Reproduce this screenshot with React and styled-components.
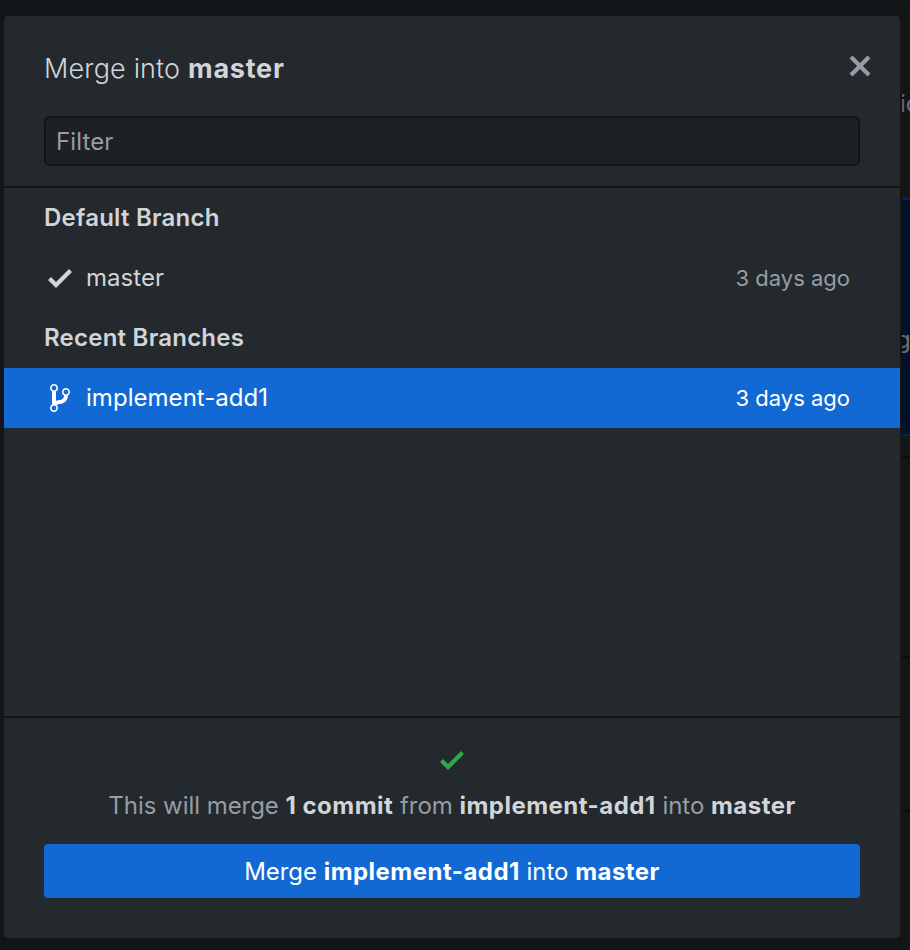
import React from 'react';
import styled, { createGlobalStyle } from 'styled-components';

const GlobalStyle = createGlobalStyle`
  * { box-sizing: border-box; }
  body {
    margin: 0;
    background: #14181b;
    font-family: Inter, "Liberation Sans", sans-serif;
    overflow: hidden;
  }
`;

const Window = styled.div`
  position: relative;
  width: 910px;
  height: 950px;
  overflow: hidden;
`;

const Backdrop = styled.div`
  display: flex;
  flex-direction: column;
  align-items: stretch;
  height: 100%;
  margin-left: 902px;
`;

const BackdropBlock = styled.div`
  flex: none;
  height: ${(p) => p.$height}px;
  padding-top: ${(p) => p.$top || 0}px;
  overflow: hidden;
  white-space: nowrap;
  font-size: 24px;
  line-height: 30px;
  color: #7c7d80;
  background: ${(p) => (p.$selected ? '#01132d' : 'transparent')};
  border-top: ${(p) => (p.$selected ? '2px solid #042a5a' : '0')};
  border-bottom: 2px solid ${(p) => (p.$selected ? '#042a5a' : p.$line || '#0a0b0c')};
`;

const BackdropText = styled.div`
  margin-left: ${(p) => p.$shift || 0}px;
`;

const Dialog = styled.section`
  position: absolute;
  top: 16px;
  left: 4px;
  width: 896px;
  height: 922px;
  display: flex;
  flex-direction: column;
  background: #24292d;
  border-radius: 4px;
  box-shadow: 0 0 0 2px #141414, 0 4px 14px 2px rgba(17, 17, 18, 0.5);
  color: #d1d5da;
`;

const Header = styled.header`
  flex: none;
  height: 172px;
  padding: 34px 28px 20px 40px;
  border-bottom: 2px solid #141414;
`;

const TitleBar = styled.div`
  display: flex;
  justify-content: space-between;
  height: 66px;
`;

const Title = styled.h1`
  margin: 1px 0 0;
  font-size: 27px;
  line-height: 36px;
  font-weight: 330;
  letter-spacing: 0.15px;
  b { font-weight: 700; letter-spacing: 0.75px; }
`;

const CloseButton = styled.button`
  height: 32px;
  padding: 0;
  border: 0;
  background: none;
  color: #959da5;
`;

const FilterInput = styled.input`
  display: block;
  width: 816px;
  height: 50px;
  padding: 0 10px;
  border: 2px solid #141414;
  border-radius: 6px;
  outline: none;
  background: #1d2024;
  font: 400 24px Inter, sans-serif;
  letter-spacing: 0.1px;
  color: #d1d5da;
  &::placeholder { color: #959da5; opacity: 1; }
`;

const BranchList = styled.div`
  flex: 1;
`;

const GroupTitle = styled.h2`
  margin: 0;
  height: 60px;
  padding-left: 40px;
  font-size: 24px;
  line-height: 59px;
  font-weight: 600;
  letter-spacing: 0.24px;
`;

const BranchRow = styled.div`
  display: flex;
  align-items: center;
  height: 60px;
  padding: 0 50px 0 40px;
  background: ${(p) => (p.$selected ? '#1269d3' : 'transparent')};
  color: ${(p) => (p.$selected ? '#fff' : '#d1d5da')};
`;

const IconSlot = styled.span`
  display: flex;
  justify-content: center;
  width: 32px;
  margin-right: 10px;
`;

const BranchName = styled.span`
  flex: 1;
  font-size: 24px;
  line-height: 30px;
  font-weight: 420;
  letter-spacing: 0.04px;
`;

const BranchDate = styled.time`
  font-size: 22px;
  line-height: 30px;
  font-weight: 410;
  color: ${(p) => (p.$selected ? '#fff' : '#959da5')};
`;

const Footer = styled.footer`
  flex: none;
  display: flex;
  flex-direction: column;
  align-items: center;
  height: 222px;
  padding: 26px 40px 40px;
  border-top: 2px solid #141414;
`;

const Summary = styled.p`
  margin: 14px 0 23px;
  font-size: 24px;
  line-height: 31px;
  letter-spacing: -0.04px;
  white-space: nowrap;
  color: #959da5;
  b { color: #d1d5da; font-weight: 700; letter-spacing: 0.47px; }
`;

const MergeButton = styled.button`
  width: 816px;
  height: 54px;
  padding: 0;
  border: 0;
  border-radius: 4px;
  background: #1269d3;
  color: #fff;
  font: 400 24px Inter, sans-serif;
  letter-spacing: -0.04px;
  b { font-weight: 700; letter-spacing: 0.47px; }
`;

const Glyph = styled.svg`
  display: block;
  fill: ${(p) => p.$color || 'currentColor'};
`;

const CheckIcon = ({ color }) => (
  <Glyph $color={color} width="24" height="32" viewBox="0 0 12 16">
    <path d="M12 5l-8 8-4-4 1.5-1.5L4 10l6.5-6.5z" />
  </Glyph>
);

const BranchIcon = () => (
  <Glyph width="20" height="32" viewBox="0 0 10 16">
    <path fillRule="evenodd" d="M10 5c0-1.11-.89-2-2-2a1.993 1.993 0 0 0-1 3.72v.3c-.02.52-.23.98-.63 1.38-.4.4-.86.61-1.38.63-.83.02-1.48.16-2 .45V4.72a1.993 1.993 0 0 0-1-3.72C.88 1 0 1.89 0 3a2 2 0 0 0 1 1.72v6.56c-.59.35-1 .99-1 1.72 0 1.11.89 2 2 2 1.11 0 2-.89 2-2 0-.53-.2-1-.53-1.36.09-.06.48-.41.59-.47.25-.11.56-.17.94-.17 1.05-.05 1.95-.45 2.75-1.25S8.95 7.77 9 6.73h-.02C9.59 6.37 10 5.73 10 5zM2 1.8c.66 0 1.2.55 1.2 1.2 0 .65-.55 1.2-1.2 1.2C1.35 4.2.8 3.65.8 3c0-.65.55-1.2 1.2-1.2zm0 12.41c-.66 0-1.2-.55-1.2-1.2 0-.65.55-1.2 1.2-1.2.65 0 1.2.55 1.2 1.2 0 .65-.55 1.2-1.2 1.2zm6-8c-.66 0-1.2-.55-1.2-1.2 0-.65.55-1.2 1.2-1.2.65 0 1.2.55 1.2 1.2 0 .65-.55 1.2-1.2 1.2z" />
  </Glyph>
);

const CloseIcon = () => (
  <Glyph width="24" height="32" viewBox="0 0 12 16">
    <path d="M7.48 8l3.75 3.75-1.48 1.48L6 9.48l-3.75 3.75-1.48-1.48L4.52 8 .77 4.25l1.48-1.48L6 6.52l3.75-3.75 1.48 1.48z" />
  </Glyph>
);

export default function App() {
  return (
    <Window>
      <GlobalStyle />
      <Backdrop>
        <BackdropBlock $height={198} $top={89} $line="transparent"><BackdropText $shift={-2}>ic</BackdropText></BackdropBlock>
        <BackdropBlock $height={238} $top={125} $selected><BackdropText $shift={-6}>g</BackdropText></BackdropBlock>
        <BackdropBlock $height={22} />
        <BackdropBlock $height={200} />
        <BackdropBlock $height={154} />
      </Backdrop>
      <Dialog>
        <Header>
          <TitleBar>
            <Title>Merge into <b>master</b></Title>
            <CloseButton aria-label="Close"><CloseIcon /></CloseButton>
          </TitleBar>
          <FilterInput placeholder="Filter" />
        </Header>
        <BranchList>
          <GroupTitle>Default Branch</GroupTitle>
          <BranchRow>
            <IconSlot><CheckIcon /></IconSlot>
            <BranchName>master</BranchName>
            <BranchDate>3 days ago</BranchDate>
          </BranchRow>
          <GroupTitle>Recent Branches</GroupTitle>
          <BranchRow $selected>
            <IconSlot><BranchIcon /></IconSlot>
            <BranchName>implement-add1</BranchName>
            <BranchDate $selected>3 days ago</BranchDate>
          </BranchRow>
        </BranchList>
        <Footer>
          <CheckIcon color="#2fa84c" />
          <Summary>
            This will merge <b>1 commit</b> from <b>implement-add1</b> into <b>master</b>
          </Summary>
          <MergeButton>Merge <b>implement-add1</b> into <b>master</b></MergeButton>
        </Footer>
      </Dialog>
    </Window>
  );
}
